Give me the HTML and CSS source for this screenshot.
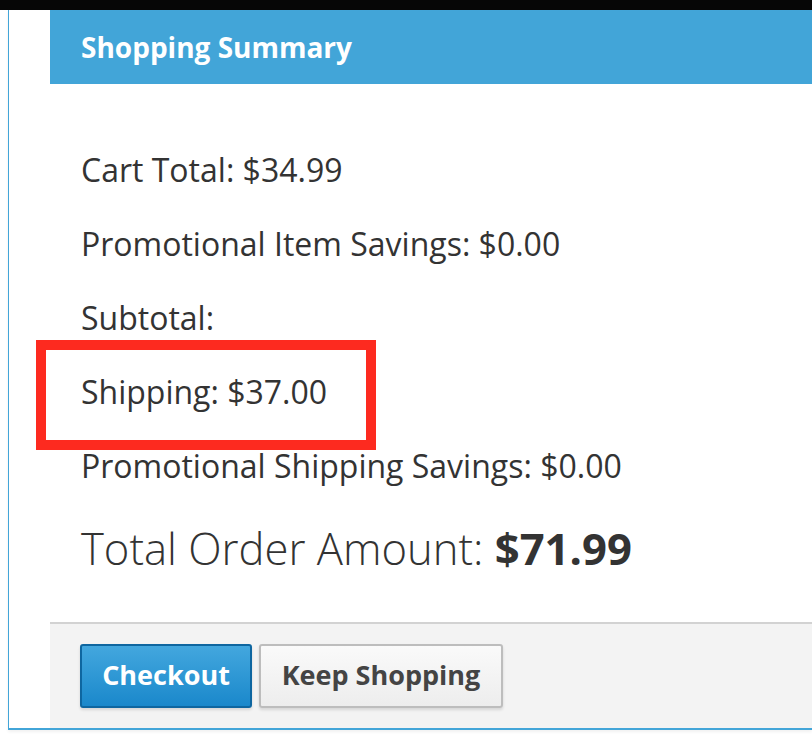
FILE: index.html
```html
<!DOCTYPE html>
<html>
<head>
<meta charset="utf-8">
<link rel="stylesheet" href="styles.css">
</head>
<body>
<div class="topbar"></div>
<div class="frame">
  <div class="panel">
    <div class="panel-head">Shopping Summary</div>
    <div class="panel-body">
      <div class="row">Cart Total: $34.99</div>
      <div class="row">Promotional Item Savings: $0.00</div>
      <div class="row">Subtotal:</div>
      <div class="row">Shipping: $37.00</div>
      <div class="row">Promotional Shipping Savings: $0.00</div>
      <div class="total">Total Order Amount: <b>$71.99</b></div>
    </div>
    <div class="panel-foot">
      <button class="btn btn-primary">Checkout</button>
      <button class="btn btn-default">Keep Shopping</button>
    </div>
  </div>
</div>
<div class="highlight"></div>
</body>
</html>
```

FILE: styles.css
```css
html, body {
  margin: 0;
  padding: 0;
  background: #fff;
  overflow: hidden;
}
body {
  width: 812px;
  height: 752px;
  position: relative;
  font-family: "Open Sans", "Liberation Sans", sans-serif;
  color: #333;
}
.topbar {
  height: 10px;
  background: #060606;
}
.frame {
  margin-left: 8px;
  border-left: 1px solid #42a5d8;
  border-bottom: 2px solid #42a5d8;
  padding-left: 41px;
  box-shadow: 0 2px 3px rgba(0,0,0,0.06);
}
.panel {
  background: #fff;
}
.panel-head {
  height: 74px;
  background: #42a5d8;
  color: #fff;
  font-weight: 700;
  font-size: 28px;
  line-height: 74px;
  padding-left: 31px;
  box-sizing: border-box;
}
.panel-body {
  padding: 49px 0 37px 31px;
}
.row {
  font-size: 32px;
  line-height: 74px;
  height: 74px;
  white-space: nowrap;
}
.total {
  margin-top: 8px;
  font-size: 43.6px;
  font-weight: 300;
  line-height: 74px;
  height: 74px;
  white-space: nowrap;
}
.total b {
  font-weight: 700;
}
.panel-foot {
  border-top: 2px solid #d2d2d2;
  background: #f3f3f3;
  padding: 20px 0 20px 30px;
  display: flex;
  gap: 7px;
}
.btn {
  height: 64px;
  font-family: "Open Sans", "Liberation Sans", sans-serif;
  font-size: 27px;
  font-weight: 700;
  border-radius: 3px;
  padding: 0 0 3px;
  margin: 0;
  white-space: nowrap;
  box-shadow: 0 2px 3px rgba(0,0,0,0.12);
}
.btn-primary {
  width: 172px;
  color: #fff;
  background: linear-gradient(#43a7de, #1a88cb);
  border: 2px solid #0e66a0;
}
.btn-default {
  width: 244px;
  color: #444;
  background: linear-gradient(#fafafa, #ededed);
  border: 2px solid #bdbdbd;
}
.highlight {
  position: absolute;
  left: 36px;
  top: 340px;
  width: 340px;
  height: 110px;
  box-sizing: border-box;
  border: 10px solid #fd2a1f;
}
```
